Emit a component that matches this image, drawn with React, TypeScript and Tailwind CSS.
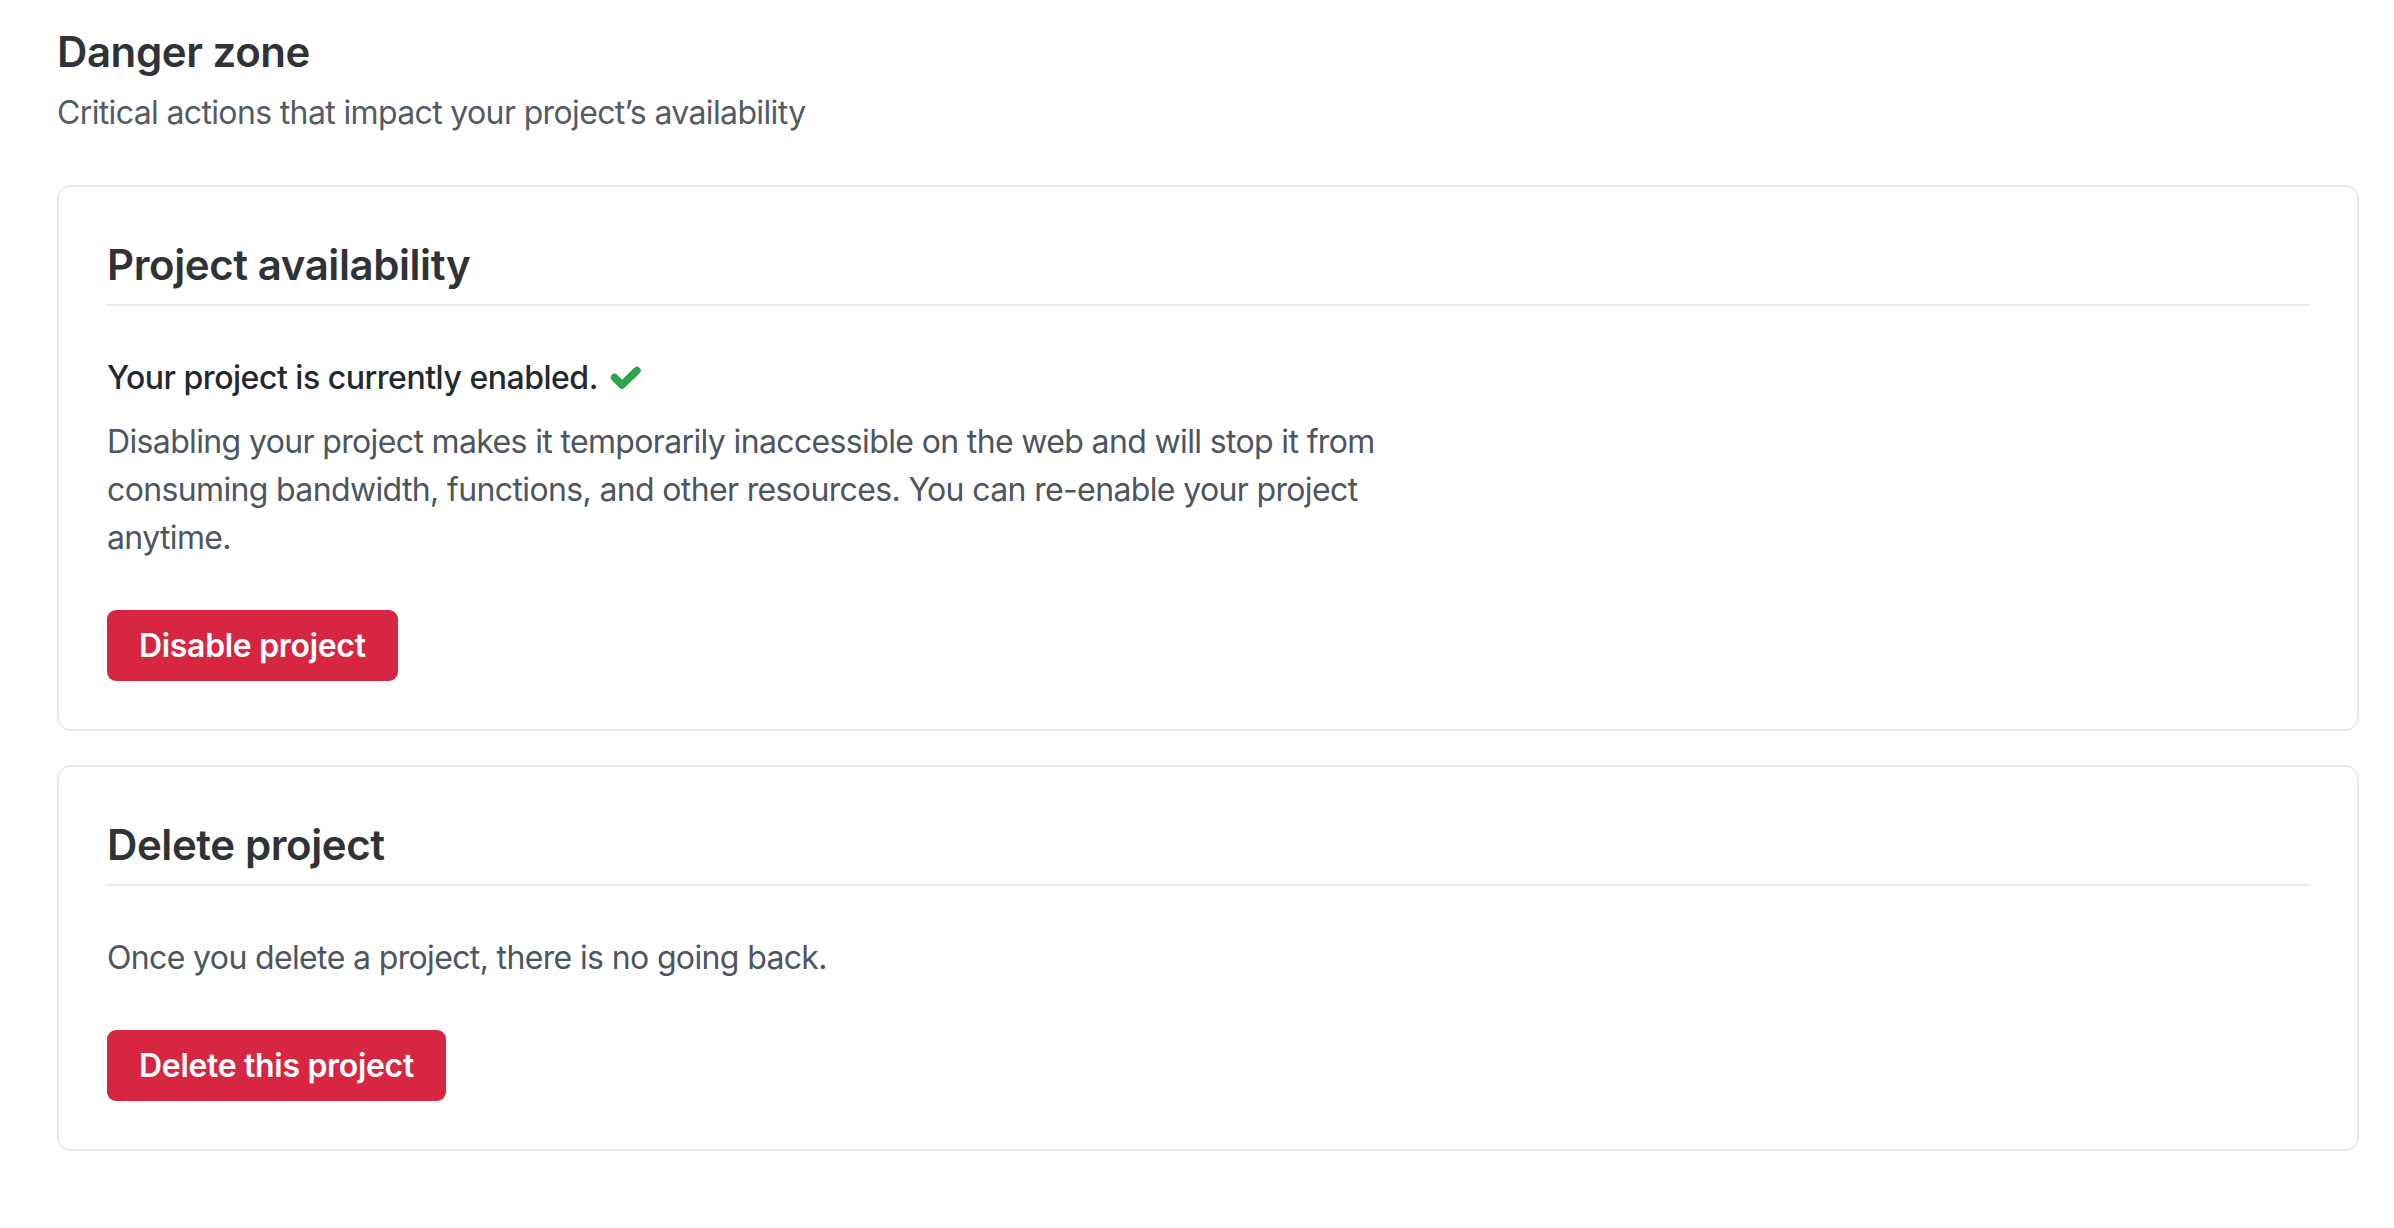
import { ReactNode } from "react";

function CheckIcon() {
  return (
    <svg viewBox="0 0 32 24" className="w-[32px] h-[24px] text-[#2ea44f]" aria-hidden>
      <polyline
        points="4.5,11.5 12,19 27,4.5"
        fill="none"
        stroke="currentColor"
        strokeWidth="7.5"
        strokeLinecap="round"
        strokeLinejoin="round"
      />
    </svg>
  );
}

function DangerButton({ children }: { children: ReactNode }) {
  return (
    <button className="h-[71px] px-[32px] rounded-[9px] bg-[#d72642] text-white text-[32px] font-semibold leading-none tracking-[-0.01em]">
      {children}
    </button>
  );
}

function Section({ title, children }: { title: string; children: ReactNode }) {
  return (
    <section className="border-2 border-[#ebebeb] rounded-[14px] bg-white px-[48px] pt-[48px] pb-[48px]">
      <h2 className="text-[42px] leading-[60px] font-semibold tracking-[-0.01em] text-[#2f3337] pb-[9px] border-b-2 border-[#ebebeb]">
        {title}
      </h2>
      {children}
    </section>
  );
}

export default function App() {
  return (
    <div className="min-h-screen bg-white pl-[57px] pr-[35px] pt-[22px] pb-[60px] font-['Inter',_'Liberation_Sans',_sans-serif]">
      <h1 className="text-[42px] leading-[60px] font-semibold tracking-[-0.01em] text-[#2f3337]">
        Danger zone
      </h1>
      <p className="mt-[7px] text-[32px] leading-[48px] tracking-[-0.02em] text-[#535b64]">
        Critical actions that impact your project’s availability
      </p>

      <div className="mt-[48px] flex flex-col gap-[34px]">
        <Section title="Project availability">
          <div className="mt-[48px] flex items-center gap-[12px]">
            <span className="text-[32px] leading-[48px] font-medium tracking-[-0.015em] text-[#24292f]">
              Your project is currently enabled.
            </span>
            <CheckIcon />
          </div>
          <p className="mt-[16px] max-w-[1380px] text-[32px] leading-[48px] tracking-[-0.02em] text-[#4d5560]">
            Disabling your project makes it temporarily inaccessible on the web and will stop it
            from consuming bandwidth, functions, and other resources. You can re-enable your
            project anytime.
          </p>
          <div className="mt-[48px]">
            <DangerButton>Disable project</DangerButton>
          </div>
        </Section>

        <Section title="Delete project">
          <p className="mt-[48px] text-[32px] leading-[48px] tracking-[-0.02em] text-[#4d5560]">
            Once you delete a project, there is no going back.
          </p>
          <div className="mt-[48px]">
            <DangerButton>Delete this project</DangerButton>
          </div>
        </Section>
      </div>
    </div>
  );
}
